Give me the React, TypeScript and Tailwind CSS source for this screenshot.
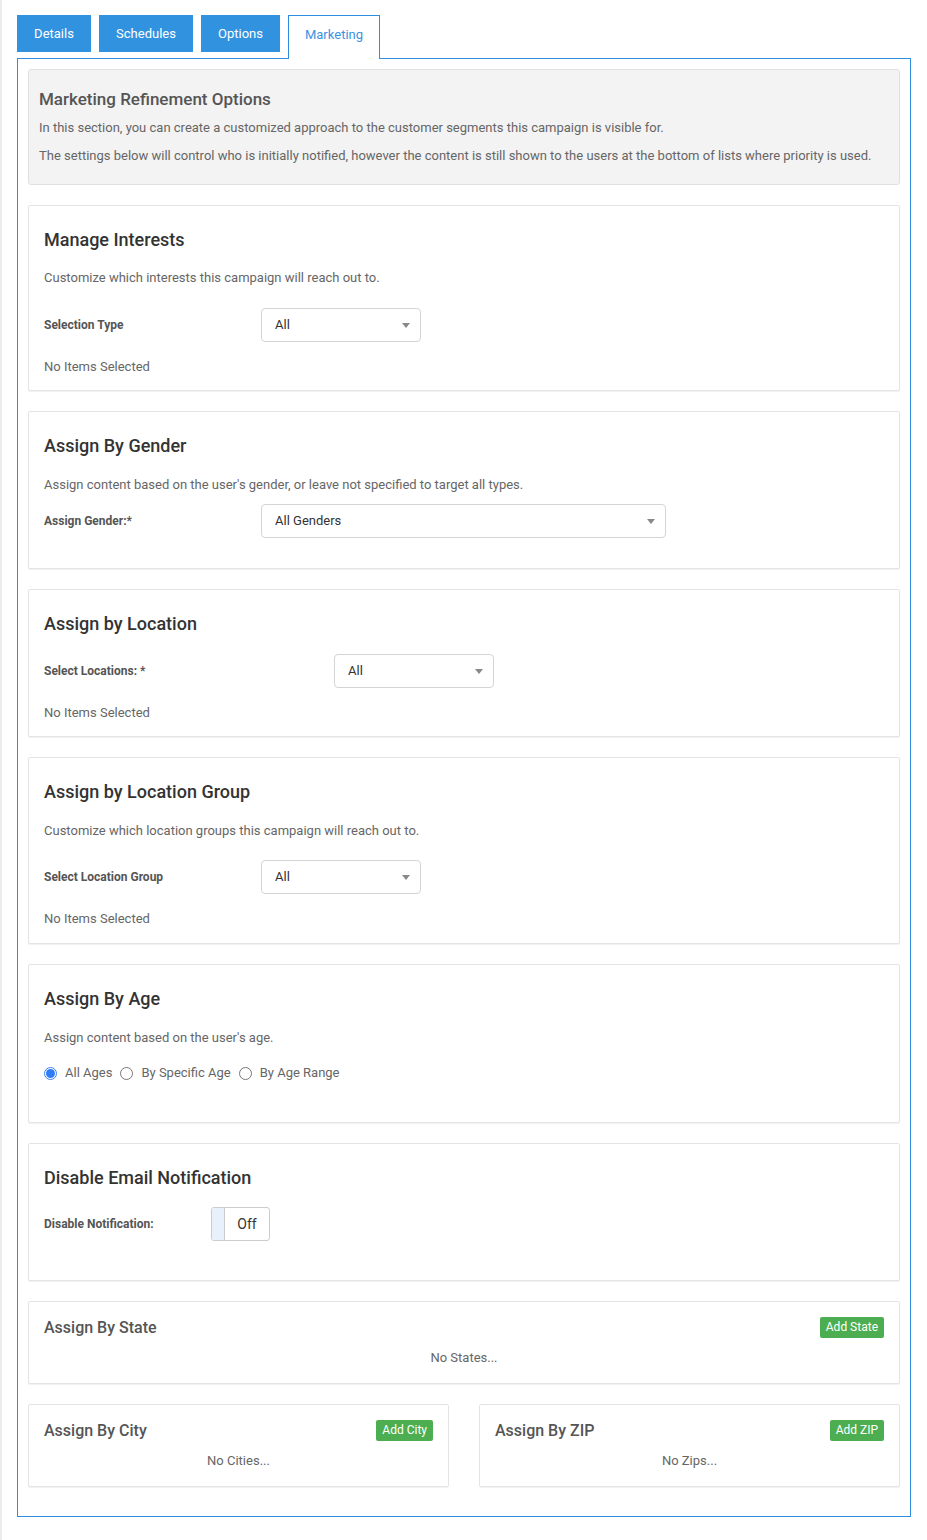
import type { ReactNode } from 'react';

const tabs = [
    { label: 'Details', w: 'w-[74px]' },
    { label: 'Schedules', w: 'w-[94px]' },
    { label: 'Options', w: 'w-[79px]' },
];

function Card({ children, className = '' }: { children: ReactNode; className?: string }) {
    return (
        <div
            className={`bg-white border border-[#e4e4e8] rounded-[2px] shadow-[0_1px_1px_rgba(0,0,0,0.06)] px-[15px] ${className}`}
        >
            {children}
        </div>
    );
}

function CardTitle({ children }: { children: ReactNode }) {
    return <h3 className="text-[18px] leading-[22px] font-medium text-[#333]">{children}</h3>;
}

function Desc({ children, className = '' }: { children: ReactNode; className?: string }) {
    return <p className={`text-[13px] leading-[18px] text-[#666] ${className}`}>{children}</p>;
}

function Label({ children, className = '' }: { children: ReactNode; className?: string }) {
    return (
        <div className={`text-[12px] leading-[18px] font-bold text-[#555] shrink-0 ${className}`}>
            {children}
        </div>
    );
}

function SelectBox({ value, width }: { value: string; width: string }) {
    return (
        <div
            className={`${width} h-[34px] border border-[#d5d5d5] rounded-[4px] bg-white flex items-center justify-between pl-[13px] pr-[10px]`}
        >
            <span className="text-[13px] text-[#333]">{value}</span>
            <svg width="8" height="5" viewBox="0 0 8 5">
                <path d="M0 0 L8 0 L4 5 Z" fill="#888" />
            </svg>
        </div>
    );
}

function Radio({ checked, label }: { checked?: boolean; label: string }) {
    return (
        <label className="flex items-center gap-[8px] text-[13px] text-[#666]">
            {checked ? (
                <span className="w-[13px] h-[13px] rounded-full border border-[#3b82f6] bg-white flex items-center justify-center">
                    <span className="w-[9px] h-[9px] rounded-full bg-[#2f7cf6]" />
                </span>
            ) : (
                <span className="w-[13px] h-[13px] rounded-full border border-[#777] bg-white" />
            )}
            {label}
        </label>
    );
}

function GreenButton({ children }: { children: ReactNode }) {
    return (
        <button className="h-[21px] px-[6px] rounded-[2px] bg-[#4cae50] text-white text-[12px] leading-[21px]">
            {children}
        </button>
    );
}

function ListCard({ title, button, empty }: { title: string; button: string; empty: string }) {
    return (
        <Card className="pt-[15px] pb-[16px]">
            <div className="flex items-center justify-between h-[21px]">
                <h4 className="text-[16px] font-medium text-[#555]">{title}</h4>
                <GreenButton>{button}</GreenButton>
            </div>
            <p className="mt-[11px] text-center text-[13px] leading-[18px] text-[#666]">{empty}</p>
        </Card>
    );
}

export default function App() {
    return (
        <div
            className="min-h-[1540px] bg-white border-l-2 border-[#ebebf0] pl-[15px] pt-[15px]"
            style={{ fontFamily: 'Roboto, "Open Sans", Arial, sans-serif' }}
        >
            <div className="flex items-start gap-2">
                {tabs.map((t) => (
                    <button
                        key={t.label}
                        className={`${t.w} h-[37px] bg-[#3192e0] text-white text-[13px]`}
                    >
                        {t.label}
                    </button>
                ))}
                <div className="w-[92px] h-[44px] -mb-px relative z-10 bg-white border border-b-0 border-[#2e8fe0] text-[#3b93e0] text-[13px] text-center pt-[9px]">
                    Marketing
                </div>
            </div>

            <div className="w-[894px] border border-[#2e8fe0] px-[10px] pt-[10px] pb-[10px]">
                <div className="bg-[#f3f3f3] border border-[#e0e0e0] rounded-[3px] px-[10px] pt-[19px] pb-[19px]">
                    <h2 className="text-[17px] leading-[20px] font-medium text-[#555]">
                        Marketing Refinement Options
                    </h2>
                    <p className="mt-[10px] text-[13px] leading-[18px] text-[#666]">
                        In this section, you can create a customized approach to the customer segments this campaign is visible for.
                    </p>
                    <p className="mt-[10px] text-[13px] leading-[18px] text-[#666]">
                        The settings below will control who is initially notified, however the content is still shown to the users at the bottom of lists where priority is used.
                    </p>
                </div>

                <div className="mt-[20px] flex flex-col gap-[20px]">
                    <Card className="pt-[23px] pb-[14px]">
                        <CardTitle>Manage Interests</CardTitle>
                        <Desc className="mt-[18px]">Customize which interests this campaign will reach out to.</Desc>
                        <div className="mt-[21px] flex items-center">
                            <Label className="w-[217px]">Selection Type</Label>
                            <SelectBox value="All" width="w-[160px]" />
                        </div>
                        <Desc className="mt-[16px] text-[#555]">No Items Selected</Desc>
                    </Card>

                    <Card className="pt-[23px] pb-[30px]">
                        <CardTitle>Assign By Gender</CardTitle>
                        <Desc className="mt-[19px]">
                            Assign content based on the user's gender, or leave not specified to target all types.
                        </Desc>
                        <div className="mt-[10px] flex items-center">
                            <Label className="w-[217px]">Assign Gender:*</Label>
                            <SelectBox value="All Genders" width="w-[405px]" />
                        </div>
                    </Card>

                    <Card className="pt-[23px] pb-[14px]">
                        <CardTitle>Assign by Location</CardTitle>
                        <div className="mt-[19px] flex items-center">
                            <Label className="w-[290px]">Select Locations: *</Label>
                            <SelectBox value="All" width="w-[160px]" />
                        </div>
                        <Desc className="mt-[16px] text-[#555]">No Items Selected</Desc>
                    </Card>

                    <Card className="pt-[23px] pb-[15px]">
                        <CardTitle>Assign by Location Group</CardTitle>
                        <Desc className="mt-[19px]">Customize which location groups this campaign will reach out to.</Desc>
                        <div className="mt-[20px] flex items-center">
                            <Label className="w-[217px]">Select Location Group</Label>
                            <SelectBox value="All" width="w-[160px]" />
                        </div>
                        <Desc className="mt-[16px] text-[#555]">No Items Selected</Desc>
                    </Card>

                    <Card className="pt-[23px] pb-[40px]">
                        <CardTitle>Assign By Age</CardTitle>
                        <Desc className="mt-[19px]">Assign content based on the user's age.</Desc>
                        <div className="mt-[17px] flex items-center gap-[8px] h-[18px]">
                            <Radio checked label="All Ages" />
                            <Radio label="By Specific Age" />
                            <Radio label="By Age Range" />
                        </div>
                    </Card>

                    <Card className="pt-[23px] pb-[39px]">
                        <CardTitle>Disable Email Notification</CardTitle>
                        <div className="mt-[18px] flex items-center">
                            <Label className="w-[167px]">Disable Notification:</Label>
                            <div className="w-[59px] h-[34px] border border-[#ccc] rounded-[3px] flex overflow-hidden">
                                <div className="w-[13px] bg-[#e8f1fb] border-r border-[#ccc]" />
                                <div className="flex-1 flex items-center justify-center text-[14px] text-[#333]">
                                    Off
                                </div>
                            </div>
                        </div>
                    </Card>

                    <ListCard title="Assign By State" button="Add State" empty="No States..." />

                    <div className="grid grid-cols-2 gap-[30px]">
                        <ListCard title="Assign By City" button="Add City" empty="No Cities..." />
                        <ListCard title="Assign By ZIP" button="Add ZIP" empty="No Zips..." />
                    </div>
                </div>
                <div className="h-[19px]" />
            </div>
        </div>
    );
}
